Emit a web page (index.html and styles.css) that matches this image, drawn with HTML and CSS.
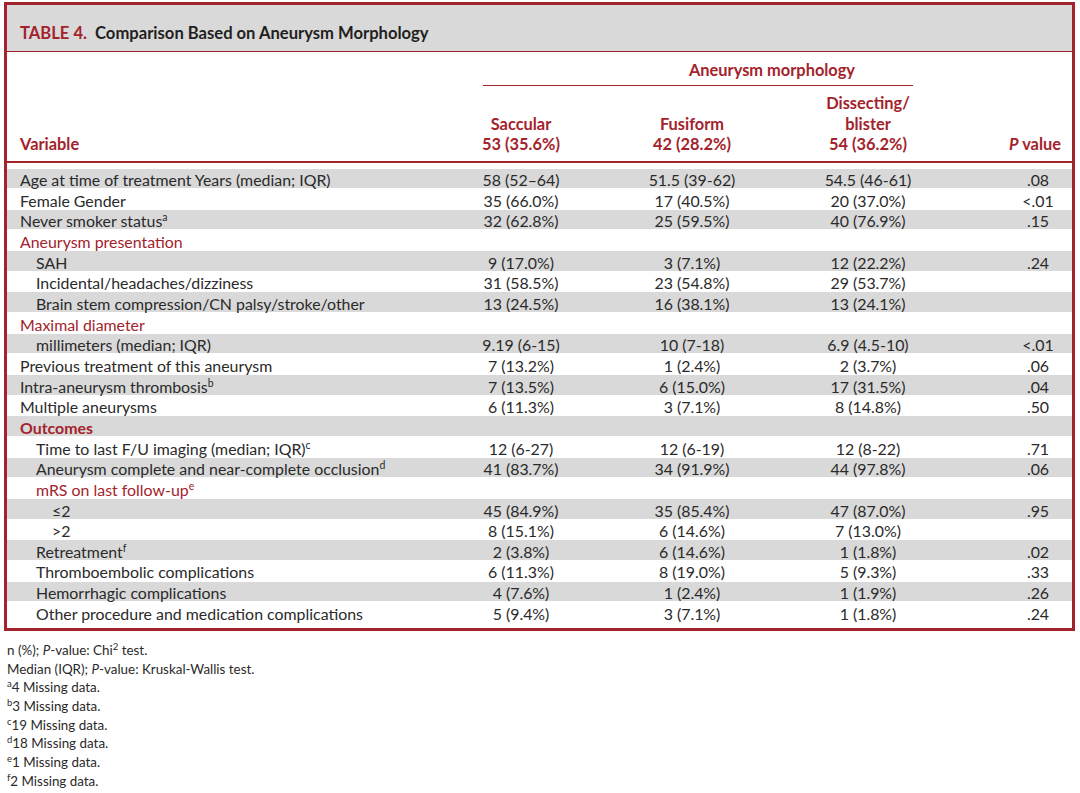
FILE: index.html
```html
<!DOCTYPE html>
<html>
<head>
<meta charset="utf-8">
<link rel="stylesheet" href="styles.css">
</head>
<body>
<div class="frame">
  <div class="title"><span class="tnum">TABLE 4.</span>&nbsp; Comparison Based on Aneurysm Morphology</div>
  <div class="head">
    <div class="spanrow">
      <div class="spancell">
        <div class="spantext">Aneurysm morphology</div>
        <div class="spanline"></div>
      </div>
    </div>
    <div class="hrow">
      <div class="hvar">Variable</div>
      <div class="hc">Saccular<br>53 (35.6%)</div>
      <div class="hc">Fusiform<br>42 (28.2%)</div>
      <div class="hc">Dissecting/<br>blister<br>54 (36.2%)</div>
      <div class="hsp"></div>
      <div class="hc hp"><i>P</i> value</div>
    </div>
  </div>
  <div class="body">
    <div class="row g"><div class="v l0">Age at time of treatment Years (median; IQR)</div><div class="c">58 (52–64)</div><div class="c">51.5 (39-62)</div><div class="c">54.5 (46-61)</div><div></div><div class="c">.08</div></div>
    <div class="row w"><div class="v l0">Female Gender</div><div class="c">35 (66.0%)</div><div class="c">17 (40.5%)</div><div class="c">20 (37.0%)</div><div></div><div class="c">&lt;.01</div></div>
    <div class="row g"><div class="v l0">Never smoker status<sup>a</sup></div><div class="c">32 (62.8%)</div><div class="c">25 (59.5%)</div><div class="c">40 (76.9%)</div><div></div><div class="c">.15</div></div>
    <div class="row w"><div class="v l0 red">Aneurysm presentation</div><div class="c"></div><div class="c"></div><div class="c"></div><div></div><div class="c"></div></div>
    <div class="row g"><div class="v l1">SAH</div><div class="c">9 (17.0%)</div><div class="c">3 (7.1%)</div><div class="c">12 (22.2%)</div><div></div><div class="c">.24</div></div>
    <div class="row w"><div class="v l1">Incidental/headaches/dizziness</div><div class="c">31 (58.5%)</div><div class="c">23 (54.8%)</div><div class="c">29 (53.7%)</div><div></div><div class="c"></div></div>
    <div class="row g"><div class="v l1">Brain stem compression/CN palsy/stroke/other</div><div class="c">13 (24.5%)</div><div class="c">16 (38.1%)</div><div class="c">13 (24.1%)</div><div></div><div class="c"></div></div>
    <div class="row w"><div class="v l0 red">Maximal diameter</div><div class="c"></div><div class="c"></div><div class="c"></div><div></div><div class="c"></div></div>
    <div class="row g"><div class="v l1">millimeters (median; IQR)</div><div class="c">9.19 (6-15)</div><div class="c">10 (7-18)</div><div class="c">6.9 (4.5-10)</div><div></div><div class="c">&lt;.01</div></div>
    <div class="row w"><div class="v l0">Previous treatment of this aneurysm</div><div class="c">7 (13.2%)</div><div class="c">1 (2.4%)</div><div class="c">2 (3.7%)</div><div></div><div class="c">.06</div></div>
    <div class="row g"><div class="v l0">Intra-aneurysm thrombosis<sup>b</sup></div><div class="c">7 (13.5%)</div><div class="c">6 (15.0%)</div><div class="c">17 (31.5%)</div><div></div><div class="c">.04</div></div>
    <div class="row w"><div class="v l0">Multiple aneurysms</div><div class="c">6 (11.3%)</div><div class="c">3 (7.1%)</div><div class="c">8 (14.8%)</div><div></div><div class="c">.50</div></div>
    <div class="row g"><div class="v l0 red bold">Outcomes</div><div class="c"></div><div class="c"></div><div class="c"></div><div></div><div class="c"></div></div>
    <div class="row w"><div class="v l1">Time to last F/U imaging (median; IQR)<sup>c</sup></div><div class="c">12 (6-27)</div><div class="c">12 (6-19)</div><div class="c">12 (8-22)</div><div></div><div class="c">.71</div></div>
    <div class="row g"><div class="v l1">Aneurysm complete and near-complete occlusion<sup>d</sup></div><div class="c">41 (83.7%)</div><div class="c">34 (91.9%)</div><div class="c">44 (97.8%)</div><div></div><div class="c">.06</div></div>
    <div class="row w"><div class="v l1 red">mRS on last follow-up<sup>e</sup></div><div class="c"></div><div class="c"></div><div class="c"></div><div></div><div class="c"></div></div>
    <div class="row g"><div class="v l2">≤2</div><div class="c">45 (84.9%)</div><div class="c">35 (85.4%)</div><div class="c">47 (87.0%)</div><div></div><div class="c">.95</div></div>
    <div class="row w"><div class="v l2">&gt;2</div><div class="c">8 (15.1%)</div><div class="c">6 (14.6%)</div><div class="c">7 (13.0%)</div><div></div><div class="c"></div></div>
    <div class="row g"><div class="v l1">Retreatment<sup>f</sup></div><div class="c">2 (3.8%)</div><div class="c">6 (14.6%)</div><div class="c">1 (1.8%)</div><div></div><div class="c">.02</div></div>
    <div class="row w"><div class="v l1">Thromboembolic complications</div><div class="c">6 (11.3%)</div><div class="c">8 (19.0%)</div><div class="c">5 (9.3%)</div><div></div><div class="c">.33</div></div>
    <div class="row g"><div class="v l1">Hemorrhagic complications</div><div class="c">4 (7.6%)</div><div class="c">1 (2.4%)</div><div class="c">1 (1.9%)</div><div></div><div class="c">.26</div></div>
    <div class="row w"><div class="v l1">Other procedure and medication complications</div><div class="c">5 (9.4%)</div><div class="c">3 (7.1%)</div><div class="c">1 (1.8%)</div><div></div><div class="c">.24</div></div>
  </div>
</div>
<div class="notes">
  <div>n (%); <i>P</i>-value: Chi<sup>2</sup> test.</div>
  <div>Median (IQR); <i>P</i>-value: Kruskal-Wallis test.</div>
  <div><sup>a</sup>4 Missing data.</div>
  <div><sup>b</sup>3 Missing data.</div>
  <div><sup>c</sup>19 Missing data.</div>
  <div><sup>d</sup>18 Missing data.</div>
  <div><sup>e</sup>1 Missing data.</div>
  <div><sup>f</sup>2 Missing data.</div>
</div>
</body>
</html>
```

FILE: styles.css
```css
* { box-sizing: border-box; }
body {
  margin: 0;
  background: #fff;
  font-family: Lato, "Liberation Sans", sans-serif;
  color: #2a2a2a;
}
.frame {
  margin: 2px 0 0 4px;
  width: 1071px;
  border: 3px solid #a3232c;
}
.title {
  background: #d9d9d9;
  height: 47px;
  border-bottom: 1px solid #a3232c;
  padding: 18px 0 0 13px;
  font-size: 16.6px;
  line-height: 21px;
  font-weight: 700;
  color: #231f20;
}
.tnum { color: #a3232c; }
.head { color: #a3232c; font-weight: 700; font-size: 16.4px; }
.spanrow {
  display: grid;
  grid-template-columns: 429px 522px 114px;
}
.spancell { grid-column: 2; padding-top: 8px; }
.spantext { line-height: 20px; text-align: center; padding-left: 150px; }
.spanline { margin: 5px 45px 0 47px; border-top: 1px solid #a3232c; }
.hrow {
  display: grid;
  grid-template-columns: 429px 170px 172px 180px 46px 68px;
  align-items: end;
  padding: 7px 0 6px;
  line-height: 20.5px;
  border-bottom: 2px solid #a3232c;
}
.hvar { padding-left: 13px; }
.hc { text-align: center; }
.hp { text-align: right; padding-right: 11px; }
.body { padding: 5px 0 6px; font-size: 15.9px; }
.row {
  display: grid;
  grid-template-columns: 429px 170px 172px 180px 46px 68px;
  height: 20.67px;
  line-height: 16.67px;
  padding-top: 3.5px;
  border-top: 1px solid #fff;
}
.row.g { background: #d9d9d9; }
.row.w { background: #fff; }
.c { text-align: center; }
.l0 { padding-left: 13px; }
.l1 { padding-left: 29px; }
.l2 { padding-left: 45px; }
.red { color: #a3232c; }
.bold { font-weight: 700; }
sup {
  font-size: 10.5px;
  line-height: 0;
  vertical-align: 0;
  position: relative;
  top: -6px;
}
.notes {
  margin-top: 10px;
  padding-left: 7px;
  font-size: 13.4px;
  line-height: 18.7px;
  color: #2a2a2a;
}
.notes sup { font-size: 9.5px; top: -5px; }
```
